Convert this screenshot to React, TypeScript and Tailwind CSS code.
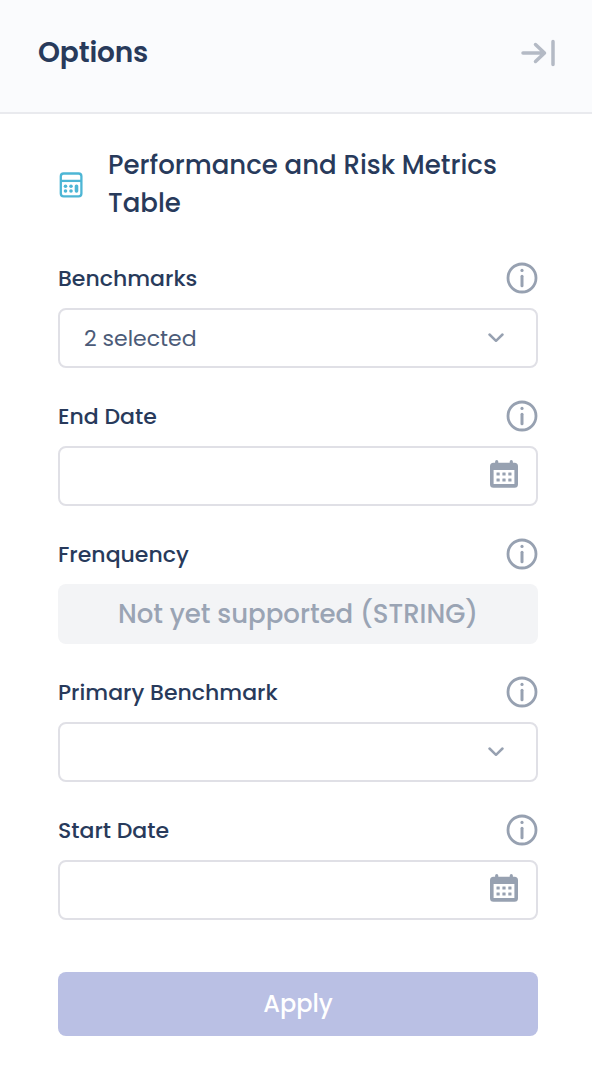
import React from "react";

function InfoIcon() {
  return (
    <svg className="h-8 w-8 text-[#97a1b1]" viewBox="0 0 32 32" fill="none" stroke="currentColor" aria-hidden="true">
      <circle cx="16" cy="16" r="14" strokeWidth="2.8" />
      <path d="M16 14.300v9.400" strokeWidth="3" strokeLinecap="round" />
      <circle cx="16" cy="8.400" r="1.600" fill="currentColor" stroke="none" />
    </svg>
  );
}

function CalendarIcon() {
  return (
    <svg className="h-7 w-7 text-[#97a1b1]" viewBox="0 0 28 28" fill="currentColor" aria-hidden="true">
      <path
        fillRule="evenodd"
        d="M5.100 1.700a1.600 1.600 0 0 1 3.200 0V2.800h11.400V1.700a1.600 1.600 0 0 1 3.200 0V2.800H24.500A3.500 3.500 0 0 1 28 6.300v18A3.500 3.500 0 0 1 24.500 27.800h-21A3.500 3.500 0 0 1 0 24.300v-18A3.500 3.500 0 0 1 3.500 2.800h1.600zM3.600 10v13.900h20.800V10z"
      />
      {[6.5, 12.4, 18.3].map((x) =>
        [12.4, 18.4].map((y) => <rect key={`${x}-${y}`} x={x} y={y} width="3.200" height="3.200" rx="0.4" />)
      )}
    </svg>
  );
}

function ChevronIcon() {
  return (
    <svg className="h-4 w-4 text-[#97a1b1]" viewBox="0 0 16 16" fill="none" stroke="currentColor" strokeWidth="2.500" strokeLinecap="round" strokeLinejoin="round" aria-hidden="true">
      <path d="m1.500 4.500 6.500 6.300 6.500-6.300" />
    </svg>
  );
}

function Field({ label, children }: { label: string; children: React.ReactNode }) {
  return (
    <div className="flex flex-col gap-[14px]">
      <div className="flex h-8 items-center justify-between">
        <span className="pt-0.5 text-[22px] font-medium leading-8 text-[#283a5b]">{label}</span>
        <InfoIcon />
      </div>
      {children}
    </div>
  );
}

const box = "flex h-[60px] w-full items-center rounded-lg border-2 border-[#e0e0e6] bg-white";

export default function App() {
  return (
    <div className="flex h-[1068px] w-[592px] flex-col bg-white font-['Poppins','Inter',sans-serif] antialiased">
      <header className="flex h-[114px] items-center justify-between border-b-2 border-[#e9eaee] bg-[#fafbfd] pb-1.5 pl-[38px] pr-9">
        <h1 className="text-[28px] font-semibold leading-10 tracking-[-0.15px] text-[#283a5b]">Options</h1>
        <svg className="h-7 w-9 text-[#b4bac5]" viewBox="0 0 36 28" fill="none" stroke="currentColor" strokeWidth="3.500" strokeLinecap="round" strokeLinejoin="round" aria-hidden="true">
          <path d="M3 14h21M15.500 5.500l9 8.500-9 8.500M33 2.500v23" />
        </svg>
      </header>

      <main className="flex flex-col pl-[58px] pr-[54px] pt-8">
        <div className="flex items-center">
          <svg className="mt-0.5 h-[26px] w-[26px] shrink-0 text-[#4db6d5]" viewBox="0 0 26 26" fill="none" stroke="currentColor" strokeWidth="2.300" aria-hidden="true">
            <rect x="2.800" y="1.500" width="20.600" height="22.800" rx="2.800" />
            <path d="M3 8.900h20" />
            <g fill="currentColor" stroke="none">
              <circle cx="7.500" cy="14.200" r="1.800" />
              <circle cx="13" cy="14.200" r="1.800" />
              <circle cx="7.500" cy="19" r="1.800" />
              <circle cx="13" cy="19" r="1.800" />
              <rect x="16.700" y="12.400" width="3.600" height="8.400" rx="1.700" />
            </g>
          </svg>
          <h2 className="ml-6 whitespace-nowrap text-[26px] font-medium leading-[38px] text-[#283a5b]">
            Performance and Risk Metrics
            <br />
            Table
          </h2>
        </div>

        <div className="mt-10 flex flex-col gap-8">
          <Field label="Benchmarks">
            <button className={`${box} justify-between pl-6 pr-8`}>
              <span className="text-[22px] text-[#4c5b78]">2 selected</span>
              <ChevronIcon />
            </button>
          </Field>
          <Field label="End Date">
            <button className={`${box} justify-end pb-1 pr-[18px]`} aria-label="End Date">
              <CalendarIcon />
            </button>
          </Field>
          <Field label="Frenquency">
            <div className="flex h-[60px] items-center justify-center rounded-lg bg-[#f3f4f6] text-[26px] font-medium text-[#9aa4b4]">
              Not yet supported (STRING)
            </div>
          </Field>
          <Field label="Primary Benchmark">
            <button className={`${box} justify-end pr-8`} aria-label="Primary Benchmark">
              <ChevronIcon />
            </button>
          </Field>
          <Field label="Start Date">
            <button className={`${box} justify-end pb-1 pr-[18px]`} aria-label="Start Date">
              <CalendarIcon />
            </button>
          </Field>
        </div>

        <button className="mt-[52px] h-16 w-full rounded-lg bg-[#bac0e4] text-[24px] font-medium text-white">
          Apply
        </button>
      </main>
    </div>
  );
}
